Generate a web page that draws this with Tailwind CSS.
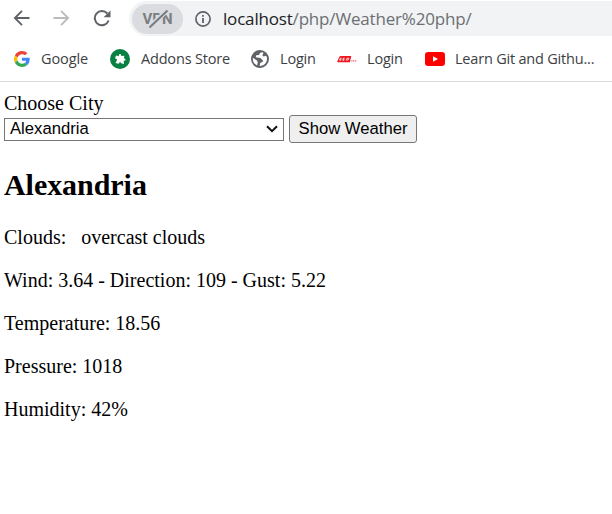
<!DOCTYPE html>
<html lang="en">
<head>
<meta charset="utf-8">
<title>Weather</title>
<script src="https://cdn.jsdelivr.net/npm/@tailwindcss/browser@4"></script>
</head>
<body class="bg-white w-[612px] h-[514px] overflow-hidden">
<header class="h-[82px] border-b border-[#d9dbdf] font-['Open_Sans',sans-serif] whitespace-nowrap">
  <div class="h-[37px] pt-px flex">
    <div class="w-[129px] h-[35px] flex items-center pl-[13px] gap-[23px] shrink-0">
      <svg class="w-[17px] h-[17px] shrink-0" viewBox="0 0 17 17" fill="none" stroke="#5f6368" stroke-width="1.9"><path d="M16.5 8H2M9 .9L1.9 8L9 15.1"/></svg>
      <svg class="w-[17px] h-[17px] shrink-0" viewBox="0 0 17 17" fill="none" stroke="#babcbe" stroke-width="1.9"><path d="M.5 8H15M8 .9L15.1 8L8 15.1"/></svg>
      <svg class="w-[18px] h-[18px] shrink-0" viewBox="0 0 18 18" fill="none" stroke="#5f6368" stroke-width="2"><path d="M14.300 3.500A7.100 7.100 0 1 0 15.600 10.500"/><path d="M17.500 .4V7.300H10.600Z" fill="#5f6368" stroke="none"/></svg>
    </div>
    <div class="flex-1 h-[35px] rounded-l-full bg-[#f1f3f4] flex items-center pl-[3px]">
      <div class="w-[51px] h-[30px] rounded-full bg-[#dadce0] flex items-center justify-center relative">
        <span class="font-['Roboto',sans-serif] font-bold text-[15px] leading-none text-[#7b7e83] relative top-px">VPN</span>
        <svg class="absolute left-[13px] top-[5px] w-[28px] h-[20px]" viewBox="0 0 28 20"><path d="M7 15.500L20 3.500" stroke="#dadce0" stroke-width="4.500"/><path d="M4.500 18.500L22.500 1.500" stroke="#777a7f" stroke-width="2"/></svg>
      </div>
      <svg class="ml-[12px] w-[16px] h-[16px] shrink-0" viewBox="0 0 16 16"><circle cx="8" cy="8" r="7.1" fill="none" stroke="#5f6368" stroke-width="1.7"/><path d="M8 7V12M8 4V5.8" stroke="#5f6368" stroke-width="1.8"/></svg>
      <div class="ml-[12px] text-[17px] tracking-[-0.18px] leading-[24px] text-[#6c6f73]"><span class="text-[#202124]">localhost</span>/php/Weather%20php/</div>
    </div>
  </div>
  <nav class="h-[44px] flex items-center text-[14.5px] text-[#3c4043]">
    <a class="flex items-center w-[96px] pl-[14px] shrink-0">
      <svg class="w-[16px] h-[16px] mr-[11px] shrink-0" viewBox="0 0 48 48"><path fill="#ea4335" d="M24 9.5c3.5 0 6.700 1.200 9.200 3.600l6.900-6.900C35.900 2.400 30.500 0 24 0 14.600 0 6.500 5.400 2.600 13.200l8 6.200C12.400 13.700 17.700 9.500 24 9.500z"/><path fill="#4285f4" d="M47 24.600c0-1.600-.2-3.100-.4-4.600H24v9h12.900c-.6 3-2.200 5.500-4.700 7.200l7.700 6C44.400 38 47 32 47 24.600z"/><path fill="#fbbc05" d="M10.500 28.600a14.500 14.500 0 0 1 0-9.200l-8-6.200a24 24 0 0 0 0 21.600z"/><path fill="#34a853" d="M24 48c6.500 0 11.900-2.100 15.900-5.800l-7.700-6c-2.200 1.500-4.900 2.300-8.200 2.300-6.300 0-11.600-4.200-13.500-9.900l-8 6.200C6.500 42.600 14.600 48 24 48z"/></svg>
      <span class="tracking-[-0.1px]">Google</span></a>
    <a class="flex items-center w-[140px] pl-[14px] shrink-0">
      <svg class="w-[20px] h-[20px] mr-[11px] shrink-0" viewBox="0 0 20 20"><circle cx="10" cy="10" r="10" fill="#0b8043"/><path fill="#fff" d="M6 6.500L8.800 7.300C8.600 4.200 11.500 4.200 11.300 7L14.500 6.800L13.800 9.200C16.200 9.400 16 12 13.600 11.700L14 15L11.200 14.300C10.700 12.600 9.300 12.800 8.700 14.700L5.500 14L6.800 11.500C7.400 10.300 6.600 9.700 5 9.600Z"/></svg>
      <span class="tracking-[-0.18px]">Addons Store</span></a>
    <a class="flex items-center w-[87px] pl-[15px] shrink-0">
      <svg class="w-[18px] h-[18px] mr-[11px] shrink-0" viewBox="0 0 18 18"><circle cx="9" cy="9" r="9" fill="#5f6368"/><path fill="#fff" d="M11.500 2.300C9.500 2.500 8.300 3.500 8.200 5L5.300 5.200C4.300 6.500 5 7.500 6.500 7.600L9.300 8C10.300 8.600 10.600 9.600 11.600 10L12 11.400L9.200 13L8.600 16C11.500 16 14 14.500 15.300 12C16.500 9.500 16 7.200 15.200 5.800L12.500 6.500L11.300 5.200L12.500 3Z"/><path fill="#fff" d="M2 7.800L5.500 10.300L6.800 12L6.200 15.500C3.200 14.200 1.300 11 2 7.800Z"/></svg>
      <span class="tracking-[-0.18px]">Login</span></a>
    <a class="flex items-center w-[88px] pl-[14px] shrink-0">
      <svg class="w-[21px] h-[10px] mr-[9px] shrink-0" viewBox="0 0 22 10"><path fill="#ee1820" d="M2.600 2.500Q3 1.800 4 1.800H15L13.500 8.300H1Q0 8.300 .4 7Z"/><path d="M4.800 4.200H3.300L2.700 6.300H4.400M3 5.200H4.600M8 4.200H6.600L6 6.300H7.600M6.300 5.200H7.900M9.800 6.500L10.500 4.200H12.400L11.700 6H10" fill="none" stroke="#fff" stroke-width=".8"/><path d="M15 7H20.500" stroke="#ee1820" stroke-width="1.500" stroke-dasharray="1.300 .6" opacity=".7"/></svg>
      <span class="tracking-[-0.18px]">Login</span></a>
    <a class="flex items-center pl-[14px] shrink-0">
      <svg class="w-[20px] h-[14px] mr-[10px] shrink-0" viewBox="0 0 20 14"><rect width="20" height="14" rx="3.2" fill="#f00"/><path fill="#fff" d="M8 4.200V9.800L13 7Z"/></svg>
      <span class="tracking-[-0.2px]">Learn Git and Githu...</span></a>
  </nav>
</header>
<main class="pl-[4px] pt-[10px] font-['Liberation_Serif',serif] text-[20px] leading-[23px] text-black">
  <form>
    <label class="block">Choose City</label>
    <div class="flex items-center h-[28px] gap-[5px] font-['Liberation_Sans',sans-serif] text-[16.67px] leading-none">
      <div class="w-[280px] h-[23px] border border-[#767676] flex items-center justify-between pl-[5px] pr-[5px]"><span>Alexandria</span><svg class="w-[12px] h-[8px]" viewBox="0 0 12 8" fill="none" stroke="#101010" stroke-width="2"><path d="M1 1.200L6 6.200L11 1.200"/></svg></div>
      <button type="button" class="w-[128px] h-[28px] rounded-[3px] border border-[#767676] bg-[#efefef]">Show Weather</button>
    </div>
  </form>
  <h2 class="mt-[24px] text-[30px] leading-[35px] font-bold tracking-[-0.05px]">Alexandria</h2>
  <div class="mt-[24px] flex flex-col gap-[20px]">
    <p class="whitespace-pre">Clouds:   overcast clouds</p>
    <p>Wind: 3.64 - Direction: 109 - Gust: 5.22</p>
    <p>Temperature: 18.56</p>
    <p>Pressure: 1018</p>
    <p>Humidity: 42%</p>
  </div>
</main>
</body>
</html>
